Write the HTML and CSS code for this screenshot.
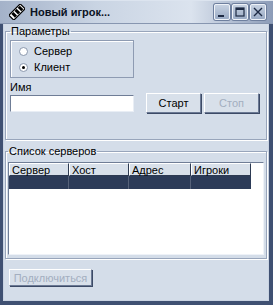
FILE: index.html
```html
<!DOCTYPE html>
<html lang="ru">
<head>
    <meta charset="UTF-8">
    <title>Новый игрок...</title>
    <link rel="stylesheet" href="styles.css">
</head>
<body>
    <div class="window">
        <div class="titlebar">
            <svg class="app-icon" viewBox="0 0 16 16" xmlns="http://www.w3.org/2000/svg">
                <g transform="rotate(-45 8 8)">
                    <rect x="0" y="4.5" width="16" height="7" fill="#fff" stroke="#000" stroke-width="1.2"/>
                    <rect x="2.5" y="5.5" width="3" height="5" fill="#000"/>
                    <rect x="7" y="5.5" width="3" height="5" fill="#000"/>
                    <rect x="11.5" y="5.5" width="3" height="5" fill="#000"/>
                </g>
            </svg>
            <span class="title">Новый игрок...</span>
            <div class="title-buttons">
                <span class="tb-btn">
                    <svg viewBox="0 0 14 14"><rect x="3" y="10" width="6" height="2" fill="#1d2a44"/></svg>
                </span>
                <span class="tb-btn">
                    <svg viewBox="0 0 14 14"><rect x="3" y="3" width="8" height="8" fill="none" stroke="#1d2a44" stroke-width="1.2"/><rect x="3" y="3" width="8" height="2" fill="#1d2a44"/></svg>
                </span>
                <span class="tb-btn">
                    <svg viewBox="0 0 14 14"><path d="M3 3 L11 11 M11 3 L3 11" stroke="#1d2a44" stroke-width="1.4"/></svg>
                </span>
            </div>
        </div>
        <div class="client">
            <fieldset class="group params">
                <legend>Параметры</legend>
                <div class="params-row">
                    <div class="params-left">
                        <div class="radio-box">
                            <label class="radio"><span class="dot"></span>Сервер</label>
                            <label class="radio checked"><span class="dot"></span>Клиент</label>
                        </div>
                        <div class="field-label">Имя</div>
                        <div class="textbox"></div>
                    </div>
                    <div class="params-buttons">
                        <span class="btn">Старт</span>
                        <span class="btn disabled">Стоп</span>
                    </div>
                </div>
            </fieldset>
            <fieldset class="group servers">
                <legend>Список серверов</legend>
                <div class="list">
                    <div class="list-head">
                        <span class="col c1">Сервер</span>
                        <span class="col c2">Хост</span>
                        <span class="col c3">Адрес</span>
                        <span class="col c4">Игроки</span>
                    </div>
                    <div class="list-row selected">
                        <span class="col c1"></span>
                        <span class="col c2"></span>
                        <span class="col c3"></span>
                        <span class="col c4"></span>
                    </div>
                </div>
            </fieldset>
            <div class="footer">
                <span class="btn disabled connect">Подключиться</span>
            </div>
        </div>
    </div>
</body>
</html>
```

FILE: styles.css
```css
body, html {
    margin: 0;
    padding: 0;
    background: #d4dde9;
    font-family: 'Liberation Sans', Arial, sans-serif;
    font-size: 11px;
    color: #000;
}
.window {
    width: 273px;
    height: 305px;
    box-sizing: border-box;
    border-left: 3px solid #3f5072;
    border-right: 4px solid #3f5072;
    border-bottom: 4px solid #3f5072;
    box-shadow: inset 1px 0 0 #c9d3e2, inset -1px -1px 0 #c9d3e2;
    background: #d4dde9;
    display: flex;
    flex-direction: column;
}
.titlebar {
    height: 24px;
    margin: 0 -4px 0 -3px;
    padding: 0 7px 0 9px;
    display: flex;
    align-items: center;
    background: linear-gradient(to right, #a4b2c9, #c9d4e3 35%, #dbe3ee 70%, #8c9cb8);
    border-top: 1px solid #dce4ef;
    border-bottom: 1px solid #8796b0;
    box-sizing: border-box;
}
.app-icon {
    width: 16px;
    height: 16px;
    margin-right: 5px;
}
.title {
    font-weight: bold;
    font-size: 11px;
    color: #0b1324;
    flex: 1;
}
.title-buttons {
    display: flex;
    gap: 2px;
}
.tb-btn {
    width: 16px;
    height: 16px;
    box-sizing: border-box;
    border: 1px solid #eef2f8;
    border-radius: 2px;
    background: linear-gradient(#c6d1e1, #9aabc5);
    box-shadow: 0 0 0 1px #6e7f9e;
    display: flex;
}
.tb-btn svg {
    width: 14px;
    height: 14px;
}
.client {
    flex: 1;
    display: flex;
    flex-direction: column;
    padding: 1px 2px 0 2px;
}
.group {
    flex-shrink: 0;
    margin: 0;
    padding: 0 3px 0 4px;
    border: 1px solid #98a5bb;
    box-shadow: inset 1px 1px 0 #fff, 1px 1px 0 #fff;
}
.group legend {
    padding: 0 1px;
    margin-left: 0;
    line-height: 13px;
}
.params {
    height: 113px;
}
.params-row {
    display: flex;
    align-items: flex-start;
    gap: 12px;
    padding-top: 2px;
}
.params-left {
    width: 124px;
}
.radio-box {
    height: 38px;
    box-sizing: border-box;
    border: 1px solid #8e9bb2;
    box-shadow: inset 1px 1px 0 #fff;
    padding: 3px 0 0 8px;
    display: flex;
    flex-direction: column;
    gap: 2px;
}
.radio {
    display: flex;
    align-items: center;
    height: 14px;
}
.dot {
    width: 9px;
    height: 9px;
    border-radius: 50%;
    box-sizing: border-box;
    border: 1px solid #8a97ad;
    background: #fff;
    margin-right: 6px;
    position: relative;
}
.radio.checked .dot::after {
    content: "";
    position: absolute;
    left: 2px;
    top: 2px;
    width: 3px;
    height: 3px;
    border-radius: 50%;
    background: #000;
}
.field-label {
    margin-top: 3px;
    line-height: 13px;
}
.textbox {
    margin-top: 1px;
    height: 17px;
    box-sizing: border-box;
    background: #fff;
    border: 1px solid #6f7d96;
    border-right-color: #e9eef5;
    border-bottom-color: #e9eef5;
}
.params-buttons {
    display: flex;
    gap: 3px;
    margin-top: 53px;
}
.btn {
    display: flex;
    align-items: center;
    justify-content: center;
    width: 55px;
    height: 20px;
    box-sizing: border-box;
    background: #d8e0ea;
    border: 1px solid #fff;
    border-right-color: #6b7994;
    border-bottom-color: #6b7994;
    box-shadow: 1px 1px 0 #3c4a66;
}
.btn.disabled {
    color: #a3aebf;
}
.servers {
    margin-top: 5px;
    padding: 0 2px 3px 2px;
}
.list {
    height: 91px;
    margin-top: 4px;
    background: #fff;
    border: 1px solid #6f7d96;
    border-right-color: #eef2f8;
    border-bottom-color: #eef2f8;
}
.list-head, .list-row {
    display: flex;
}
.col {
    box-sizing: border-box;
    height: 13px;
    line-height: 12px;
    padding-left: 2px;
}
.c1, .c2 { width: 60px; }
.c3 { width: 62px; }
.c4 { width: 60px; }
.list-head .col {
    background: #d8e0ea;
    border-top: 1px solid #fff;
    border-left: 1px solid #fff;
    border-right: 1px solid #2d3a52;
    border-bottom: 1px solid #2d3a52;
}
.list-row.selected .col {
    background: #2c3b58;
    border-right: 1px solid #56627a;
}
.list-row.selected .c4 {
    border-right: 0;
}
.footer {
    padding: 10px 0 0 4px;
}
.btn.connect {
    width: 83px;
    height: 17px;
}
```
